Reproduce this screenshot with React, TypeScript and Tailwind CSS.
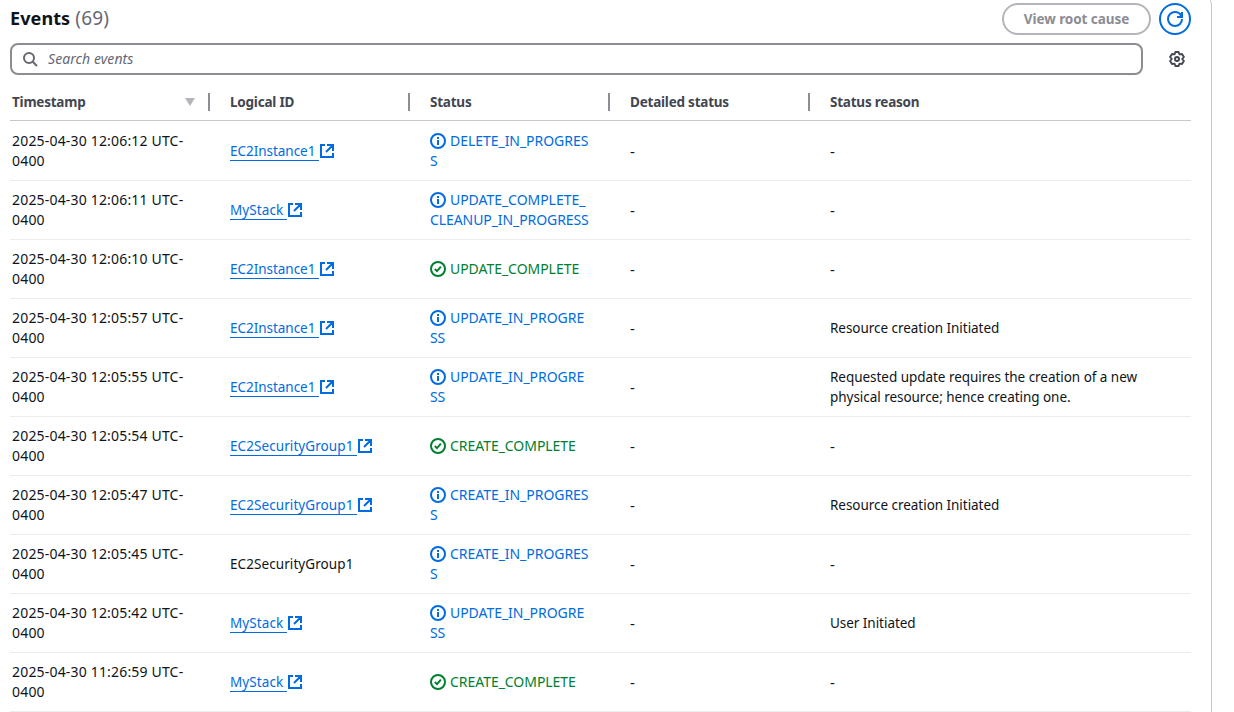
import React from "react";

type Kind = "info" | "ok";
interface Row {
  time: string;
  id: string;
  link: boolean;
  kind: Kind;
  status: string[];
  reason: string[];
}

const rows: Row[] = [
  { time: "2025-04-30 12:06:12 UTC-", id: "EC2Instance1", link: true, kind: "info", status: ["DELETE_IN_PROGRES", "S"], reason: ["-"] },
  { time: "2025-04-30 12:06:11 UTC-", id: "MyStack", link: true, kind: "info", status: ["UPDATE_COMPLETE_", "CLEANUP_IN_PROGRESS"], reason: ["-"] },
  { time: "2025-04-30 12:06:10 UTC-", id: "EC2Instance1", link: true, kind: "ok", status: ["UPDATE_COMPLETE"], reason: ["-"] },
  { time: "2025-04-30 12:05:57 UTC-", id: "EC2Instance1", link: true, kind: "info", status: ["UPDATE_IN_PROGRE", "SS"], reason: ["Resource creation Initiated"] },
  { time: "2025-04-30 12:05:55 UTC-", id: "EC2Instance1", link: true, kind: "info", status: ["UPDATE_IN_PROGRE", "SS"], reason: ["Requested update requires the creation of a new", "physical resource; hence creating one."] },
  { time: "2025-04-30 12:05:54 UTC-", id: "EC2SecurityGroup1", link: true, kind: "ok", status: ["CREATE_COMPLETE"], reason: ["-"] },
  { time: "2025-04-30 12:05:47 UTC-", id: "EC2SecurityGroup1", link: true, kind: "info", status: ["CREATE_IN_PROGRES", "S"], reason: ["Resource creation Initiated"] },
  { time: "2025-04-30 12:05:45 UTC-", id: "EC2SecurityGroup1", link: false, kind: "info", status: ["CREATE_IN_PROGRES", "S"], reason: ["-"] },
  { time: "2025-04-30 12:05:42 UTC-", id: "MyStack", link: true, kind: "info", status: ["UPDATE_IN_PROGRE", "SS"], reason: ["User Initiated"] },
  { time: "2025-04-30 11:26:59 UTC-", id: "MyStack", link: true, kind: "ok", status: ["CREATE_COMPLETE"], reason: ["-"] },
];

function Icon({ children, className = "" }: { children: React.ReactNode; className?: string }) {
  return (
    <svg viewBox="0 0 16 16" fill="none" stroke="currentColor" strokeWidth="2" className={`size-4 shrink-0 ${className}`}>
      {children}
    </svg>
  );
}

function StatusIcon({ kind }: { kind: Kind }) {
  return (
    <Icon>
      <circle cx="8" cy="8" r="7" />
      {kind === "info" ? <path d="M8 12V7M8 6V4" /> : <path d="m4.8 8 2.2 2.1 3.9-4.4" />}
    </Icon>
  );
}

const grid = "grid grid-cols-[200px_200px_200px_200px_381px]";

export default function App() {
  return (
    <div className="h-[712px] w-[1234px] overflow-hidden bg-white font-['Noto_Sans',sans-serif] text-[13.5px] leading-5 text-[#0f141a]">
      <div className="-mt-2.5 h-[730px] w-[1212px] rounded-tr-[16px] border-r border-[#c6c6cd] pt-2.5 pl-2.5">
        <header className="flex h-[43px] w-[1181px] items-start justify-between pt-[3px]">
          <h1 className="flex items-baseline gap-[5px] pt-[3px] text-[18px] leading-6 tracking-[0.1px]">
            <span className="font-bold">Events</span>
            <span className="text-[19px] tracking-[0.2px] text-[#656871]">(69)</span>
          </h1>
          <div className="flex gap-2">
            <button className="h-8 w-[149px] rounded-full border-2 border-[#b4b4bb] font-bold tracking-[-0.07px] text-[#8c8c94]">View root cause</button>
            <button className="flex size-8 items-center justify-center rounded-full border-2 border-[#006ce0] text-[#006ce0]">
              <Icon>
                <path d="M15 8c0 3.9-3.1 7-7 7s-7-3.1-7-7 3.1-7 7-7c2.8 0 5.3 1.6 6.3 4M15 1v5h-5" />
              </Icon>
            </button>
          </div>
        </header>
        <div className="flex h-8 w-[1181px] items-center">
          <div className="flex h-8 w-[1133px] items-center gap-2.5 rounded-lg border-2 border-[#8c8c94] pl-[10px] text-[#656871]">
            <Icon>
              <circle cx="7" cy="7" r="5" />
              <path d="m15 15-4.5-4.5" />
            </Icon>
            <span className="text-[14px] tracking-[0.08px] italic">Search events</span>
          </div>
          <div className="ml-[26px] text-[#424650]">
            <Icon>
              <path
                strokeWidth="1.9"
                strokeLinejoin="round"
                d="M6.4 1H9.6L10.5 3.4L13 3L14.9 6L13.2 8L14.9 10L13 13L10.5 12.6L9.6 15H6.4L5.5 12.6L3 13L1.1 10L2.8 8L1.1 6L3 3L5.5 3.4Z"
              />
              <circle cx="8" cy="8" r="2" />
            </Icon>
          </div>
        </div>
        <div className={`${grid} mt-2 h-[38px] w-[1181px] items-center border-b border-[#c6c6cd] font-bold tracking-[-0.22px] text-[#424650]`}>
          {["Timestamp", "Logical ID", "Status", "Detailed status", "Status reason"].map((name, i) => (
            <div key={name} className={`flex h-[18px] items-center justify-between ${i < 4 ? "border-r-2 border-[#8c8c94]" : ""} ${i === 0 ? "pl-0.5 pr-3" : "pl-5"}`}>
              <span>{name}</span>
              {i === 0 && (
                <svg viewBox="0 0 12 8" className="h-2 w-3 fill-[#b4b4bb]">
                  <path d="M1 0h10L6 8Z" />
                </svg>
              )}
            </div>
          ))}
        </div>
        <div className="w-[1181px] pt-px">
          {rows.map((r, i) => (
            <div key={i} className={`${grid} h-[59px] items-center border-b border-[#ebebf0]`}>
              <div className="pl-0.5 text-[14px] tracking-[0.18px]">
                <div>{r.time}</div>
                <div>0400</div>
              </div>
              <div className={`flex items-center pl-5 ${r.id === "MyStack" ? "tracking-[0.1px]" : r.id === "EC2Instance1" ? "tracking-[-0.03px]" : "tracking-[0.08px]"}`}>
                {r.link ? (
                  <div className="flex items-center text-[#006ce0]">
                    <span className={`h-5 border-b border-[#006ce0] ${r.id === "EC2SecurityGroup1" ? "pr-1" : "pr-[3.5px]"}`}>{r.id}</span>
                    <Icon>
                      <path d="M14 10v4H2V2h4M8 2h6v6M14 2 7 9" />
                    </Icon>
                  </div>
                ) : (
                  r.id
                )}
              </div>
              <div className={`pl-5 text-[14px] tracking-[-0.04px] ${r.kind === "info" ? "text-[#006ce0]" : "text-[#00802f]"}`}>
                <div className="flex items-center gap-1">
                  <StatusIcon kind={r.kind} />
                  {r.status[0]}
                </div>
                {r.status[1] && <div className="tracking-[-0.08px]">{r.status[1]}</div>}
              </div>
              <div className="pl-5 text-[15px]">-</div>
              <div className="pl-5">
                {r.reason.map((line) => (
                  <div key={line} className={line === "-" ? "text-[15px]" : "tracking-[-0.04px]"}>{line}</div>
                ))}
              </div>
            </div>
          ))}
        </div>
      </div>
    </div>
  );
}
